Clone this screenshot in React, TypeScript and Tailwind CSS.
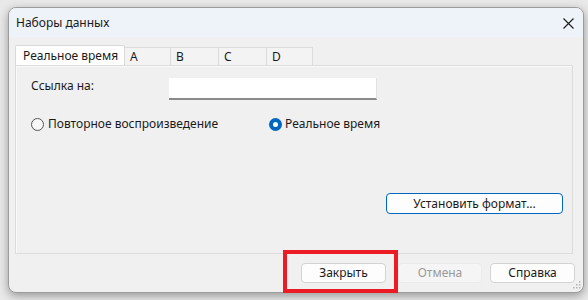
import React from 'react';

const font = { fontFamily: '"Noto Sans", "Open Sans", sans-serif' };

const Radio: React.FC<{ checked?: boolean }> = ({ checked }) =>
  checked ? (
    <div className="w-[13px] h-[13px] rounded-full bg-[#0067c0] flex items-center justify-center">
      <div className="w-[5px] h-[5px] rounded-full bg-white"></div>
    </div>
  ) : (
    <div className="w-[13px] h-[13px] rounded-full border border-[#555] bg-[#f7f7f7]"></div>
  );

const Btn: React.FC<{ label: string; disabled?: boolean; className?: string }> = ({ label, disabled, className }) => (
  <div
    className={
      'h-[20px] flex items-center justify-center rounded-[4px] text-[12px] ' +
      (disabled
        ? 'bg-[#f5f5f5] border border-[#ebebeb] text-[#9a9a9a] '
        : 'bg-[#fdfdfd] border border-[#d3d3d3] text-[#1a1a1a] ') +
      (className || '')
    }
  >
    {label}
  </div>
);

export default function App() {
  const tabs = ['A', 'B', 'C', 'D'];
  const tabWidths = ['w-[46px]', 'w-[48px]', 'w-[48px]', 'w-[46px]'];

  return (
    <div className="w-[588px] h-[300px] bg-[#e9e9e9] relative overflow-hidden pt-[7px] pl-[8px]" style={font}>
      <div className="w-[576px] h-[286px] rounded-[8px] border border-[#9c9c9c] bg-[#f0f0f0] shadow-[0_3px_10px_rgba(0,0,0,0.35)] overflow-hidden flex flex-col relative">
        {/* title bar */}
        <div className="h-[29px] bg-[#eef2f9] flex items-center justify-between pl-[7px] pr-[9px] pt-[1px]">
          <span className="text-[12px] text-[#1a1a1a]">Наборы данных</span>
          <svg width="11" height="11" viewBox="0 0 11 11">
            <path d="M0.5 0.5 L10.5 10.5 M10.5 0.5 L0.5 10.5" stroke="#1a1a1a" strokeWidth="1.1" />
          </svg>
        </div>

        {/* body */}
        <div className="pl-[6px] pr-[10px] pt-[8px] flex flex-col">
          {/* tabs */}
          <div className="flex items-end h-[20px]">
            <div className="h-[20px] w-[110px] bg-white border border-b-0 border-[#d9d9d9] rounded-t-[2px] flex items-center pl-[7px] text-[12px] text-[#1a1a1a]">
              Реальное время
            </div>
            {tabs.map((t, i) => (
              <div
                key={t}
                className={'h-[18px] bg-[#f3f3f3] border border-b-0 border-l-0 border-[#dcdcdc] flex items-center pl-[5px] pt-[1px] text-[12px] text-[#1a1a1a] ' + tabWidths[i]}
              >
                {t}
              </div>
            ))}
          </div>

          {/* panel */}
          <div className="h-[189px] border border-[#dcdcdc] bg-[#f0f0f0] shadow-[inset_1px_1px_0_#fafafa] pl-[15px] pt-[12px] flex flex-col">
            <div className="flex items-center h-[22px]">
              <span className="w-[138px] text-[12px] text-[#1a1a1a] -mt-[7px]">Ссылка на:</span>
              <div className="w-[208px] h-[22px] bg-white border-b-[2px] border-[#8a8a8a] border-r border-r-[#e2e2e2]"></div>
            </div>

            <div className="flex items-center h-[16px] mt-[16px]">
              <div className="w-[238px] flex items-center gap-[4px]">
                <Radio />
                <span className="text-[12px] text-[#1a1a1a]">Повторное воспроизведение</span>
              </div>
              <div className="flex items-center gap-[3px]">
                <Radio checked />
                <span className="text-[12px] text-[#1a1a1a]">Реальное время</span>
              </div>
            </div>

            <div className="flex justify-end pr-[9px] mt-[61px]">
              <div className="w-[177px] h-[21px] flex items-center justify-center rounded-[4px] border border-[#0067c0] bg-[#fdfdfd] text-[12px] text-[#1a1a1a]">
                Установить формат...
              </div>
            </div>
          </div>
        </div>

        {/* buttons */}
        <div className="flex pt-[9px] pl-[292px]">
          <Btn label="Закрыть" className="w-[85px]" />
          <Btn label="Отмена" disabled className="w-[84px] ml-[12px]" />
          <Btn label="Справка" className="w-[85px] ml-[8px]" />
        </div>

        {/* resize grip */}
        <svg width="8" height="8" viewBox="0 0 8 8" className="absolute right-[2px] bottom-[3px]">
          <rect x="6" y="0" width="1.5" height="1.5" fill="#b5b5b5" />
          <rect x="3" y="3" width="1.5" height="1.5" fill="#b5b5b5" />
          <rect x="6" y="3" width="1.5" height="1.5" fill="#b5b5b5" />
          <rect x="0" y="6" width="1.5" height="1.5" fill="#b5b5b5" />
          <rect x="3" y="6" width="1.5" height="1.5" fill="#b5b5b5" />
          <rect x="6" y="6" width="1.5" height="1.5" fill="#b5b5b5" />
        </svg>
      </div>

      {/* highlight annotation */}
      <div className="absolute left-[283px] top-[250px] w-[115px] h-[43px] border-[4px] border-[#ec1c24]"></div>
    </div>
  );
}
